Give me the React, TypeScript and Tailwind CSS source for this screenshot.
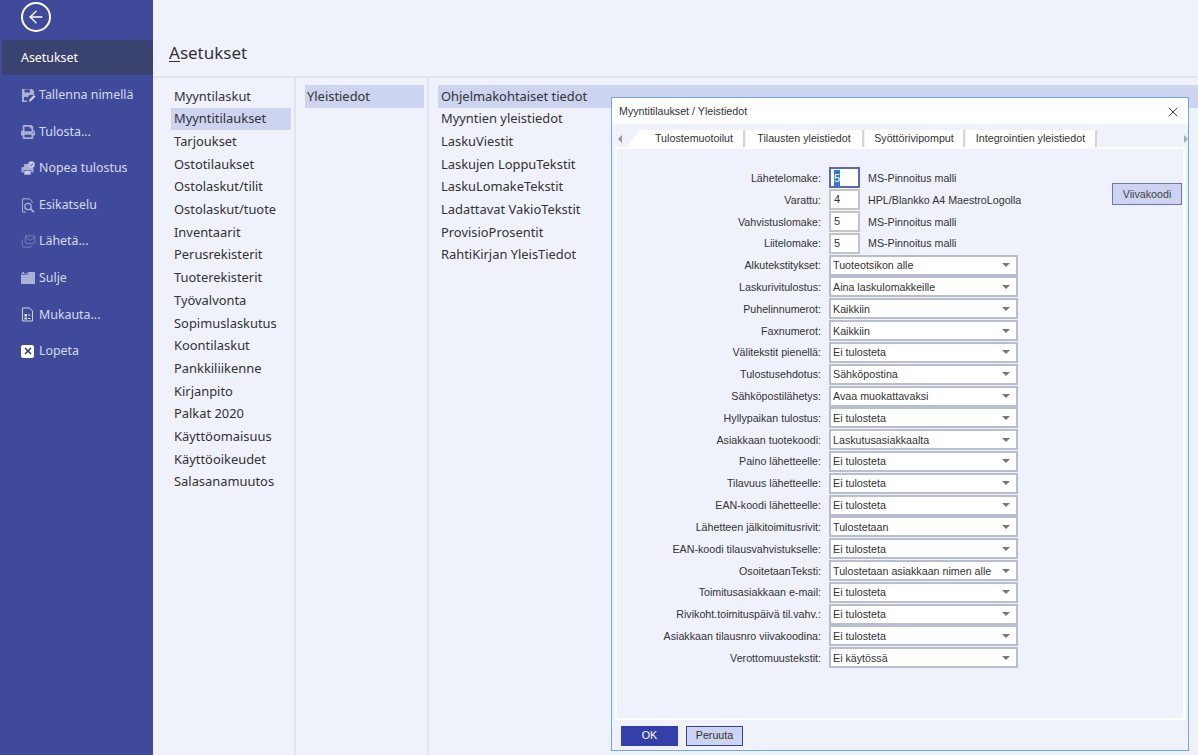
import { ArrowLeft, Mails, X } from "lucide-react";
import { FaPrint } from "react-icons/fa";

const iconColor = "#aab0d6";

const SaveIcon = () => (
  <svg width="15" height="15" viewBox="0 0 15 15" fill="none">
    <path d="M1 1h10l2 2v4H8.5L6 10v4H1z" fill={iconColor} />
    <rect x="3.5" y="1.5" width="5.5" height="3" fill="#404a9a" />
    <rect x="3" y="9" width="3" height="3.5" fill="#404a9a" />
    <path d="M8 14l.5-2.5L13 7l1.5 1.5L10 13z" fill="#d7daee" />
  </svg>
);

const QuickPrintIcon = () => (
  <svg width="15" height="15" viewBox="0 0 15 15">
    <rect x="3" y="3" width="7" height="3" fill={iconColor} />
    <rect x="0.5" y="6" width="12" height="5.5" rx="1" fill={iconColor} />
    <rect x="3" y="9.5" width="7" height="4.5" fill="#c7cbe6" stroke="#404a9a" strokeWidth="0.6" />
    <circle cx="10.5" cy="3.5" r="3.3" fill="#c7cbe6" />
    <path d="M9 3.6l1.2 1.2L12 2.6" stroke="#404a9a" strokeWidth="1" fill="none" />
  </svg>
);

const PreviewIcon = () => (
  <svg width="15" height="15" viewBox="0 0 15 15" fill="none" stroke={iconColor}>
    <path d="M5 14H1.5V.8h7l2.5 2.5V5" strokeWidth="1" />
    <circle cx="7" cy="8.5" r="3.2" strokeWidth="1.3" />
    <path d="M9.5 11l3.5 3.2" strokeWidth="1.8" />
  </svg>
);

const FolderIcon = () => (
  <svg width="14" height="12" viewBox="0 0 14 12">
    <path d="M0 1.5h1.5V0H3v1.5h3L7 0h7v12H0z" fill={iconColor} />
    <path d="M0 2.5h6.5L7.5 1" stroke="#404a9a" strokeWidth="0.6" fill="none" />
  </svg>
);

const CustomizeIcon = () => (
  <svg width="13" height="15" viewBox="0 0 13 15" fill="none">
    <path d="M1.5 1h7l3 3v10h-10z" stroke="#d0d4ec" strokeWidth="1" />
    <rect x="3.5" y="7" width="2.5" height="2.5" fill="#e4e6f5" />
    <rect x="3.5" y="10.5" width="2.5" height="2" fill="#e4e6f5" />
    <path d="M7 8h2.5M7 11.5h2.5" stroke="#e4e6f5" />
  </svg>
);

const menu = [
  { label: "Tallenna nimellä", icon: <SaveIcon /> },
  { label: "Tulosta...", icon: <FaPrint size={14} color={iconColor} /> },
  { label: "Nopea tulostus", icon: <QuickPrintIcon /> },
  { label: "Esikatselu", icon: <PreviewIcon /> },
  { label: "Lähetä...", icon: <Mails size={15} color="#7c83bb" strokeWidth={1.4} /> },
  { label: "Sulje", icon: <FolderIcon /> },
  { label: "Mukauta...", icon: <CustomizeIcon /> },
  {
    label: "Lopeta",
    icon: (
      <span className="flex h-[13px] w-[13px] items-center justify-center rounded-[2px] bg-white">
        <X size={10} color="#2f3a8c" strokeWidth={4} />
      </span>
    ),
  },
];

const categories = [
  "Myyntilaskut",
  "Myyntitilaukset",
  "Tarjoukset",
  "Ostotilaukset",
  "Ostolaskut/tilit",
  "Ostolaskut/tuote",
  "Inventaarit",
  "Perusrekisterit",
  "Tuoterekisterit",
  "Työvalvonta",
  "Sopimuslaskutus",
  "Koontilaskut",
  "Pankkiliikenne",
  "Kirjanpito",
  "Palkat 2020",
  "Käyttöomaisuus",
  "Käyttöoikeudet",
  "Salasanamuutos",
];

const details = [
  "Ohjelmakohtaiset tiedot",
  "Myyntien yleistiedot",
  "LaskuViestit",
  "Laskujen LoppuTekstit",
  "LaskuLomakeTekstit",
  "Ladattavat VakioTekstit",
  "ProvisioProsentit",
  "RahtiKirjan YleisTiedot",
];

const inputs = [
  { label: "Lähetelomake:", value: "5", note: "MS-Pinnoitus malli", focus: true },
  { label: "Varattu:", value: "4", note: "HPL/Blankko A4 MaestroLogolla" },
  { label: "Vahvistuslomake:", value: "5", note: "MS-Pinnoitus malli" },
  { label: "Liitelomake:", value: "5", note: "MS-Pinnoitus malli" },
];

const selects = [
  ["Alkutekstitykset:", "Tuoteotsikon alle"],
  ["Laskurivitulostus:", "Aina laskulomakkeille"],
  ["Puhelinnumerot:", "Kaikkiin"],
  ["Faxnumerot:", "Kaikkiin"],
  ["Välitekstit pienellä:", "Ei tulosteta"],
  ["Tulostusehdotus:", "Sähköpostina"],
  ["Sähköpostilähetys:", "Avaa muokattavaksi"],
  ["Hyllypaikan tulostus:", "Ei tulosteta"],
  ["Asiakkaan tuotekoodi:", "Laskutusasiakkaalta"],
  ["Paino lähetteelle:", "Ei tulosteta"],
  ["Tilavuus lähetteelle:", "Ei tulosteta"],
  ["EAN-koodi lähetteelle:", "Ei tulosteta"],
  ["Lähetteen jälkitoimitusrivit:", "Tulostetaan"],
  ["EAN-koodi tilausvahvistukselle:", "Ei tulosteta"],
  ["OsoitetaanTeksti:", "Tulostetaan asiakkaan nimen alle"],
  ["Toimitusasiakkaan e-mail:", "Ei tulosteta"],
  ["Rivikoht.toimituspäivä til.vahv.:", "Ei tulosteta"],
  ["Asiakkaan tilausnro viivakoodina:", "Ei tulosteta"],
  ["Verottomuustekstit:", "Ei käytössä"],
];

const tabs = [
  { label: "Tilausten yleistiedot", width: "w-[118px]" },
  { label: "Syöttörivipomput", width: "w-[100px]" },
  { label: "Integrointien yleistiedot", width: "w-[131px]" },
];

const uiFont = "font-['Noto_Sans',sans-serif]";

export default function App() {
  return (
    <div className={`relative flex h-[755px] w-[1198px] overflow-hidden bg-[#eff2fb] ${uiFont} text-[#333]`}>
      {/* sidebar */}
      <aside className="flex w-[153px] shrink-0 flex-col bg-[#404a9a]">
        <div className="flex h-10 items-start pl-[21px] pt-[2px]">
          <span className="flex h-[30px] w-[30px] items-center justify-center rounded-full border-2 border-white">
            <ArrowLeft size={20} color="white" strokeWidth={1.7} />
          </span>
        </div>
        <div className="ml-[2px] flex h-[35px] items-center bg-[#3a4270] pl-[19px] pt-[2px] text-[12.4px] text-white">Asetukset</div>
        <nav className="mt-[2px] flex flex-col">
          {menu.map((m) => (
            <div key={m.label} className="flex h-[36.6px] items-center pl-[21px] text-[12.4px] text-[#d5daf2]">
              <span className="flex w-[18px] shrink-0 items-center">{m.icon}</span>
              {m.label}
            </div>
          ))}
        </nav>
      </aside>

      {/* settings */}
      <main className="flex min-w-0 flex-1 flex-col">
        <div className="flex h-[78px] items-start border-b-2 border-[#e3e5ea] pl-4 pt-[41px] text-[17px] leading-[24px] text-[#333]">
          <span>
            <span className="underline underline-offset-2">A</span>setukset
          </span>
        </div>
        <div className="flex flex-1 text-[12.9px]">
          <div className="w-[143px] border-r-2 border-[#e3e5ea] pl-[18px] pr-[3px] pt-[7px]">
            {categories.map((c) => (
              <div
                key={c}
                className={`flex h-[22.7px] items-center pl-[3px] ${c === "Myyntitilaukset" ? "bg-[#ccd4f0]" : ""}`}
              >
                {c}
              </div>
            ))}
          </div>
          <div className="w-[133px] border-r-2 border-[#e3e5ea] pl-[9px] pr-[3px] pt-[7px]">
            <div className="flex h-[22.7px] items-center bg-[#ccd4f0] pl-[2px]">Yleistiedot</div>
          </div>
          <div className="flex-1 pl-[9px] pt-[7px]">
            {details.map((d, i) => (
              <div key={d} className={`flex h-[22.7px] items-center pl-[3px] ${i === 0 ? "bg-[#ccd4f0]" : ""}`}>
                {d}
              </div>
            ))}
          </div>
        </div>
      </main>

      {/* dialog */}
      <div className="absolute left-[611px] top-[97px] flex h-[654px] w-[578px] flex-col border border-[#6fa8e6] bg-[#eff2fb] font-['Liberation_Sans',sans-serif] text-[10.7px] text-[#333]">
        <div className="flex h-[26px] shrink-0 items-center justify-between bg-white pl-[7px] pr-[7px] pt-[1px]">
          <span>Myyntitilaukset / Yleistiedot</span>
          <X size={16} color="#222" strokeWidth={1.3} />
        </div>

        <div className="flex h-[23px] shrink-0 items-end text-center">
          <div className="flex h-[17px] w-[16px] items-center pl-[6px]">
            <span className="h-0 w-0 border-y-[4px] border-r-[4px] border-y-transparent border-r-[#999]" />
          </div>
          <div className="flex h-[17px] w-[117px] items-center justify-center border-r-2 border-[#d5d5d5] bg-white pl-[17px] [clip-path:polygon(11px_0,100%_0,100%_100%,0_100%)]">
            Tulostemuotoilut
          </div>
          {tabs.map((t) => (
            <div
              key={t.label}
              className={`ml-[1px] flex h-[17px] items-center justify-center border-r-2 border-[#d5d5d5] bg-white ${t.width}`}
            >
              {t.label}
            </div>
          ))}
          <div className="flex h-[17px] flex-1 items-center justify-end">
            <span className="h-0 w-0 border-y-[4px] border-l-[4px] border-y-transparent border-l-[#aaa]" />
          </div>
        </div>

        <div className="mx-[3px] flex min-h-0 flex-1 border-2 border-white">
          <div className="flex w-[401px] shrink-0 flex-col pt-[18px]">
            {inputs.map((r) => (
              <div key={r.label} className="flex h-[21.82px] items-center">
                <span className="w-[204px] shrink-0 text-right">{r.label}</span>
                <span
                  className={`ml-[8px] flex h-[21px] w-[31px] shrink-0 items-center border-2 bg-white pl-[3px] text-[11px] ${r.focus ? "border-[#5f67b5]" : "border-[#c4c4c4]"}`}
                >
                  {r.focus ? <span className="bg-[#2f7ad6] text-white">{r.value}</span> : r.value}
                </span>
                <span className="ml-[8px] whitespace-nowrap">{r.note}</span>
              </div>
            ))}
            {selects.map(([label, value]) => (
              <div key={label} className="flex h-[21.82px] items-center">
                <span className="w-[204px] shrink-0 whitespace-nowrap text-right">{label}</span>
                <span className="ml-[8px] flex h-[21px] w-[189px] shrink-0 items-center justify-between border-2 border-[#b9bdd0] bg-white pl-[2px] pr-[6px]">
                  {value}
                  <span className="h-0 w-0 border-x-[4px] border-t-[4px] border-x-transparent border-t-[#777]" />
                </span>
              </div>
            ))}
          </div>
          <div className="pl-[94px] pt-[34px]">
            <div className="flex h-[22px] w-[70px] items-center justify-center border border-[#6d74c4] bg-[#ccd4f0] text-[#444]">
              Viivakoodi
            </div>
          </div>
        </div>

        <div className="flex h-[30px] shrink-0 items-center gap-2 pl-[9px] pt-[1px]">
          <div className="flex h-[20px] w-[57px] items-center justify-center bg-[#3340aa] text-white">OK</div>
          <div className="flex h-[20px] w-[57px] items-center justify-center border border-[#3340aa] bg-[#ccd4f0]">
            Peruuta
          </div>
        </div>
      </div>
    </div>
  );
}
